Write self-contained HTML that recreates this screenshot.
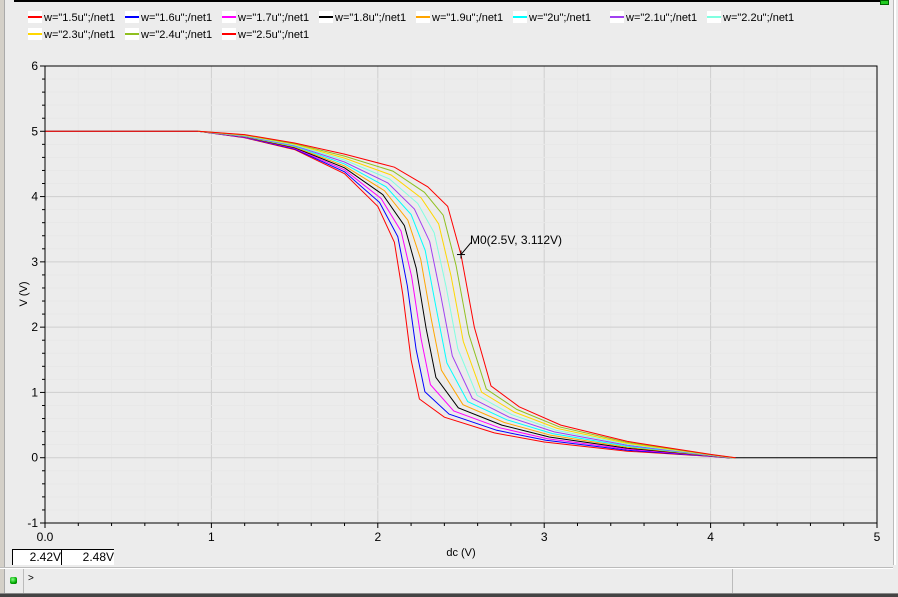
<!DOCTYPE html>
<html><head><meta charset="utf-8"><style>
body{margin:0;width:898px;height:597px;background:#ececec;position:relative;overflow:hidden;font-family:"Liberation Sans",sans-serif;font-size:11px;color:#000}
.lg{position:absolute;height:13px;line-height:13px;white-space:nowrap}
.lg i{display:inline-block;width:14px;height:2px;vertical-align:middle;margin-right:2px;position:relative;top:-1px;border:0 solid #fff;border-width:5px 0;background-clip:content-box;box-sizing:content-box}
</style></head><body>
<div style="position:absolute;left:0;top:0;width:4px;height:597px;background:#d4d0c8;border-right:1px solid #aaa"></div>
<div style="position:absolute;left:14px;top:0;width:866px;height:2px;background:#000"></div>
<div style="position:absolute;left:880px;top:0;width:7px;height:3px;background:#2c2;border:1px solid #060"></div>
<div style="position:absolute;left:893px;top:0;width:2px;height:565px;background:#fff;border-left:1px solid #bbb"></div>
<div id="lgs"></div>
<svg id="pl" width="898" height="597" style="position:absolute;left:0;top:0" font-family="Liberation Sans, sans-serif" font-size="12"></svg>
<div style="position:absolute;left:12px;top:549px;width:48px;height:15px;background:#fff;border-left:1px solid #000;border-top:1px solid #000;text-align:right;font-size:12px;line-height:15px">2.42V</div>
<div style="position:absolute;left:61px;top:549px;width:52px;height:15px;background:#fff;border-left:1px solid #000;border-top:1px solid #000;text-align:right;font-size:12px;line-height:15px">2.48V</div>
<div style="position:absolute;left:0;top:567px;width:893px;height:1px;background:#bbb"></div>
<div style="position:absolute;left:0;top:568px;width:893px;height:1px;background:#fff"></div>
<div style="position:absolute;left:23px;top:569px;width:1px;height:24px;background:#bbb"></div>
<div style="position:absolute;left:732px;top:569px;width:1px;height:24px;background:#bbb"></div>
<div style="position:absolute;left:10px;top:577px;width:7px;height:7px;border-radius:2px;background:radial-gradient(circle at 40% 35%,#8f8,#0a0 60%,#050)"></div>
<div style="position:absolute;left:28px;top:573px;font-size:10px">&gt;</div>
<div style="position:absolute;left:0;top:593px;width:898px;height:1px;background:#888"></div>
<div style="position:absolute;left:0;top:594px;width:898px;height:3px;background:#444"></div>
<script>
var L=45,R=877,T=66,B=523;
function X(v){return L+v*(R-L)/5}function Y(v){return B-(v+1)*(B-T)/7}
var s='';
for(var i=1;i<25;i++){var x=X(i*0.2);s+='<line x1="'+x+'" y1="'+T+'" x2="'+x+'" y2="'+B+'" stroke="'+(i%5?'#e8e8e8':'#cfcfcf')+'"/>'}
for(var i=1;i<35;i++){var y=Y(-1+i*0.2);s+='<line x1="'+L+'" y1="'+y+'" x2="'+R+'" y2="'+y+'" stroke="'+(i%5?'#e8e8e8':'#cfcfcf')+'"/>'}
var A=[[0.92,5],[1.2,4.9],[1.5,4.72],[1.8,4.35],[2.0,3.85],[2.1,3.3],[2.15,2.5],[2.2,1.5],[2.25,0.9],[2.4,0.62],[2.7,0.38],[3.0,0.24],[3.5,0.1],[4.0,0.02],[4.1,0]];
var Bp=[[0.92,5],[1.2,4.95],[1.5,4.82],[1.8,4.65],[2.1,4.45],[2.3,4.15],[2.42,3.85],[2.5,3.11],[2.58,2.0],[2.68,1.1],[2.85,0.78],[3.1,0.5],[3.5,0.25],[4.0,0.05],[4.15,0]];
var C=['#f00','#00f','#f0f','#000','#ffa500','#0ff','#a040f0','#80ffe0','#ffd700','#90c020','#f00'];
s+='<polyline fill="none" stroke="#000" points="'+X(0)+','+Y(5)+' '+X(0.92)+','+Y(5)+' '+X(4.1)+','+Y(0)+' '+X(5)+','+Y(0)+'" stroke-width="0"/>';
s+='<line x1="'+L+'" y1="'+Y(5)+'" x2="'+X(0.92)+'" y2="'+Y(5)+'" stroke="#000"/><line x1="'+X(4.1)+'" y1="'+Y(0)+'" x2="'+R+'" y2="'+Y(0)+'" stroke="#000"/>';
for(var k=0;k<11;k++){var t=k/10,p='';for(var j=0;j<A.length;j++){var vx=A[j][0]*(1-t)+Bp[j][0]*t,vy=A[j][1]*(1-t)+Bp[j][1]*t;p+=X(vx).toFixed(1)+','+Y(vy).toFixed(1)+' '}
s+='<polyline fill="none" stroke="'+C[k]+'" points="'+p+'"/>'}
s+='<line x1="'+L+'" y1="'+Y(5)+'" x2="'+X(0.92)+'" y2="'+Y(5)+'" stroke="#f00"/>';
s+='<rect x="'+L+'" y="'+T+'" width="'+(R-L)+'" height="'+(B-T)+'" fill="none" stroke="#000"/>';
for(var i=0;i<=35;i++){var y=Y(-1+i*0.2);s+='<line x1="'+(L-(i%5?3:5))+'" y1="'+y+'" x2="'+L+'" y2="'+y+'" stroke="#000"/>'}
for(var i=0;i<=25;i++){var x=X(i*0.2);s+='<line x1="'+x+'" y1="'+B+'" x2="'+x+'" y2="'+(B+(i%5?3:5))+'" stroke="#000"/>'}
for(var v=-1;v<=6;v++)s+='<text x="'+(L-7)+'" y="'+(Y(v)+4)+'" text-anchor="end">'+v+'</text>';
var xl=['0.0','1','2','3','4','5'];for(var v=0;v<=5;v++)s+='<text x="'+X(v)+'" y="541" text-anchor="middle">'+xl[v]+'</text>';
s+='<text x="461" y="556" text-anchor="middle" font-size="11">dc (V)</text>';
s+='<text transform="translate(27,294) rotate(-90)" text-anchor="middle" font-size="11">V (V)</text>';
var mx=X(2.5),my=Y(3.112);
s+='<line x1="'+(mx-4)+'" y1="'+my+'" x2="'+(mx+4)+'" y2="'+my+'" stroke="#000"/><line x1="'+mx+'" y1="'+(my-4)+'" x2="'+mx+'" y2="'+(my+4)+'" stroke="#000"/><line x1="'+mx+'" y1="'+my+'" x2="'+(mx+10)+'" y2="'+(my-12)+'" stroke="#000"/>';
s+='<text x="470" y="244">M0(2.5V, 3.112V)</text>';
document.getElementById('pl').innerHTML=s;
var N=['1.5u','1.6u','1.7u','1.8u','1.9u','2u','2.1u','2.2u','2.3u','2.4u','2.5u'],h='';
for(var k=0;k<11;k++){var r=k<8?0:1,c=k<8?k:k-8;h+='<div class="lg" style="left:'+(28+c*97)+'px;top:'+(12+r*17)+'px"><i style="background-color:'+C[k]+'"></i>w="'+N[k]+'";/net1</div>'}
document.getElementById('lgs').innerHTML=h;
</script>
</body></html>
